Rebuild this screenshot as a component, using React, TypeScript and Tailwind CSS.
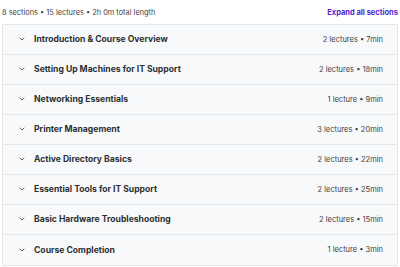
import React from "react";
import { ChevronDown } from "lucide-react";

const sections = [
  { title: "Introduction & Course Overview", meta: "2 lectures • 7min" },
  { title: "Setting Up Machines for IT Support", meta: "2 lectures • 18min" },
  { title: "Networking Essentials", meta: "1 lecture • 9min" },
  { title: "Printer Management", meta: "3 lectures • 20min" },
  { title: "Active Directory Basics", meta: "2 lectures • 22min" },
  { title: "Essential Tools for IT Support", meta: "2 lectures • 25min" },
  { title: "Basic Hardware Troubleshooting", meta: "2 lectures • 15min" },
  { title: "Course Completion", meta: "1 lecture • 3min" },
];

export default function App() {
  return (
    <div
      className="w-[400px] h-[267px] bg-white px-[2px] text-[#2d2f31]"
      style={{ fontFamily: "Inter, 'Noto Sans', sans-serif" }}
    >
      <div className="flex items-center justify-between h-[24px] pt-[2px]">
        <span className="text-[7.4px] text-[#3e4143]">
          8 sections • 15 lectures • 2h 0m total length
        </span>
        <button type="button" className="text-[7.5px] font-bold text-[#5624d0]">
          Expand all sections
        </button>
      </div>
      <ul className="border border-[#e4e7ea] w-[396px]">
        {sections.map(({ title, meta }, i) => (
          <li
            key={title}
            className={`flex items-center justify-between h-[30px] pl-[15px] pr-[14px] bg-[#f7f9fa] ${
              i < sections.length - 1 ? "border-b border-[#e4e7ea]" : ""
            }`}
          >
            <div className="flex items-center gap-[8px]">
              <ChevronDown size={8} strokeWidth={2.2} className="text-[#2d2f31]" />
              <span className="text-[8.6px] font-bold">{title}</span>
            </div>
            <span className="text-[7.5px] text-[#3e4143]">{meta}</span>
          </li>
        ))}
      </ul>
    </div>
  );
}
